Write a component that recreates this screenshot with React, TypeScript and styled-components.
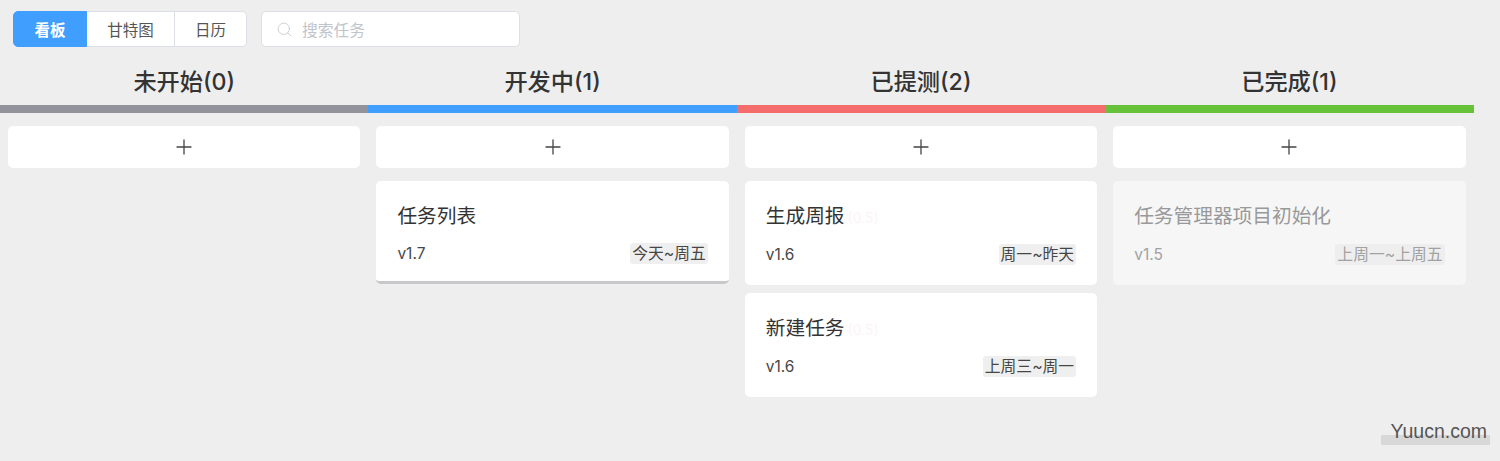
import React from "react";
import styled, { createGlobalStyle } from "styled-components";
import { Plus, Search } from "lucide-react";

const GlobalStyle = createGlobalStyle`
  html, body {
    margin: 0;
    padding: 0;
    background: #eeeeee;
    font-family: "Inter", "Noto Sans CJK SC", sans-serif;
  }
`;

const Page = styled.div`
  position: relative;
  width: 1500px;
  height: 461px;
  overflow: hidden;
  background: #eeeeee;
`;

const Toolbar = styled.div`
  display: flex;
  align-items: center;
  gap: 14px;
  padding: 11px 0 0 13px;
  height: 36px;
`;

const Segments = styled.div`
  display: flex;
  height: 36px;
  box-sizing: border-box;
`;

const Segment = styled.div<{ $active?: boolean; $width: number }>`
  width: ${(p) => p.$width}px;
  display: flex;
  align-items: center;
  justify-content: center;
  box-sizing: border-box;
  font-size: 15.5px;
  font-weight: ${(p) => (p.$active ? 600 : 400)};
  color: ${(p) => (p.$active ? "#ffffff" : "#555555")};
  background: ${(p) => (p.$active ? "#409eff" : "#ffffff")};
  border: 1px solid ${(p) => (p.$active ? "#409eff" : "#dcdfe6")};
  border-left-width: ${(p) => (p.$active ? 1 : 0)}px;
  &:first-child {
    border-radius: 5px 0 0 5px;
  }
  &:last-child {
    border-radius: 0 5px 5px 0;
  }
`;

const SearchBox = styled.div`
  width: 259px;
  height: 36px;
  box-sizing: border-box;
  display: flex;
  align-items: center;
  gap: 9px;
  padding-left: 14px;
  background: #ffffff;
  border: 1px solid #dcdfe6;
  border-radius: 5px;
  font-size: 15.75px;
  color: #c0c4cc;
`;

const Board = styled.div`
  display: grid;
  grid-template-columns: repeat(4, 368.4px);
`;

const Column = styled.div`
  display: flex;
  flex-direction: column;
`;

const ColumnTitle = styled.div<{ $color: string }>`
  height: 66px;
  box-sizing: border-box;
  display: flex;
  align-items: center;
  justify-content: center;
  padding-top: 8px;
  font-size: 23.2px;
  font-weight: 500;
  color: #333333;
  border-bottom: 8px solid ${(p) => p.$color};
`;

const ColumnBody = styled.div`
  display: flex;
  flex-direction: column;
  padding: 13px 8px 0;
`;

const AddButton = styled.div`
  height: 42px;
  display: flex;
  align-items: center;
  justify-content: center;
  margin-bottom: 13px;
  background: #ffffff;
  border-radius: 5px;
  color: #444444;
`;

const Card = styled.div<{ $done?: boolean; $lifted?: boolean }>`
  padding: 24px 21px 0;
  margin-bottom: 8px;
  min-height: ${(p) => (p.$lifted ? 76 : 80)}px;
  background: ${(p) => (p.$done ? "#f6f6f6" : "#ffffff")};
  border-radius: 5px;
  ${(p) => (p.$lifted ? "border-bottom: 3px solid #c8c8cc;" : "")}
  color: ${(p) => (p.$done ? "#999999" : "#333333")};
`;

const CardTitle = styled.div`
  font-size: 19.7px;
  line-height: 23px;
  height: 23px;
  white-space: nowrap;
`;

const Ghost = styled.span`
  margin-left: 3px;
  font-size: 14px;
  color: #fbf5f5;
`;

const CardMeta = styled.div<{ $lifted?: boolean }>`
  display: flex;
  align-items: center;
  justify-content: space-between;
  margin-top: ${(p) => (p.$lifted ? 15 : 16)}px;
  font-size: 15.5px;
  color: inherit;
  opacity: 0.9;
`;

const DateTag = styled.span`
  padding: 0 2px;
  height: 21px;
  line-height: 21px;
  font-size: 15.8px;
  border-radius: 3px;
  background: #eeeeee;
`;

const Watermark = styled.div`
  position: absolute;
  z-index: 1;
  right: 13px;
  bottom: 20px;
  font-family: "Liberation Sans", sans-serif;
  font-size: 19.5px;
  line-height: 20px;
  color: #555555;
  &::before {
    content: "";
    position: absolute;
    left: -10px;
    right: -3px;
    top: 14px;
    height: 10px;
    background: #d8d8d8;
    z-index: -1;
  }
`;

type Task = { title: string; version: string; range: string; ghost?: boolean };

const columns: { title: string; color: string; done?: boolean; lifted?: boolean; tasks: Task[] }[] = [
  { title: "未开始(0)", color: "#909399", tasks: [] },
  {
    title: "开发中(1)",
    color: "#409eff",
    lifted: true,
    tasks: [{ title: "任务列表", version: "v1.7", range: "今天~周五" }],
  },
  {
    title: "已提测(2)",
    color: "#f56c6c",
    tasks: [
      { title: "生成周报", version: "v1.6", range: "周一~昨天", ghost: true },
      { title: "新建任务", version: "v1.6", range: "上周三~周一", ghost: true },
    ],
  },
  {
    title: "已完成(1)",
    color: "#67c23a",
    done: true,
    tasks: [{ title: "任务管理器项目初始化", version: "v1.5", range: "上周一~上周五" }],
  },
];

export default function App() {
  return (
    <>
      <GlobalStyle />
      <Page>
        <Toolbar>
          <Segments>
            <Segment $active $width={74}>看板</Segment>
            <Segment $width={88}>甘特图</Segment>
            <Segment $width={72}>日历</Segment>
          </Segments>
          <SearchBox>
            <Search size={17} strokeWidth={1.1} />
            搜索任务
          </SearchBox>
        </Toolbar>
        <Board>
          {columns.map((col) => (
            <Column key={col.title}>
              <ColumnTitle $color={col.color}>{col.title}</ColumnTitle>
              <ColumnBody>
                <AddButton>
                  <Plus size={24} strokeWidth={1.3} />
                </AddButton>
                {col.tasks.map((task) => (
                  <Card key={task.title} $done={col.done} $lifted={col.lifted}>
                    <CardTitle>
                      {task.title}
                      {task.ghost && <Ghost>(0.5)</Ghost>}
                    </CardTitle>
                    <CardMeta $lifted={col.lifted}>
                      <span>{task.version}</span>
                      <DateTag>{task.range}</DateTag>
                    </CardMeta>
                  </Card>
                ))}
              </ColumnBody>
            </Column>
          ))}
        </Board>
        <Watermark>Yuucn.com</Watermark>
      </Page>
    </>
  );
}
